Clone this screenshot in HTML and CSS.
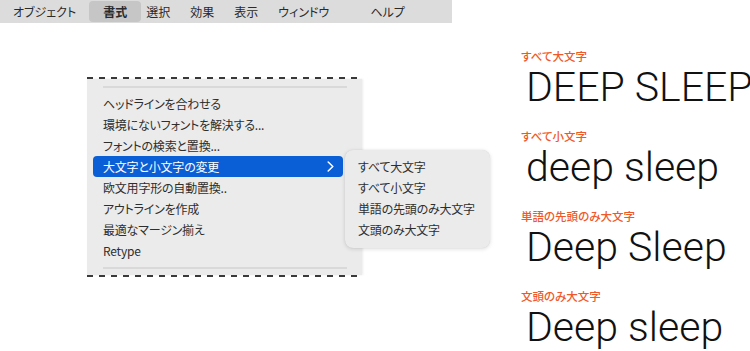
FILE: index.html
```html
<!DOCTYPE html>
<html lang="ja">
<head>
<meta charset="utf-8">
<title>大文字と小文字の変更</title>
<link rel="stylesheet" href="styles.css">
</head>
<body>
<div class="page">
  <div class="left">
    <nav class="menubar">
      <span class="mb-item first">オブジェクト</span>
      <span class="mb-item sel">書式</span>
      <span class="mb-item">選択</span>
      <span class="mb-item">効果</span>
      <span class="mb-item">表示</span>
      <span class="mb-item">ウィンドウ</span>
      <span class="mb-item help">ヘルプ</span>
    </nav>
    <div class="menu">
      <div class="dash"></div>
      <div class="menu-body">
        <div class="sep"></div>
        <ul class="items">
          <li class="item">ヘッドラインを合わせる</li>
          <li class="item">環境にないフォントを解決する...</li>
          <li class="item">フォントの検索と置換...</li>
          <li class="item active">
            <span>大文字と小文字の変更</span>
            <svg class="chev" width="7" height="11" viewBox="0 0 7 11"><path d="M1.2 1 L5.8 5.5 L1.2 10" fill="none" stroke="#fff" stroke-width="1.5" stroke-linecap="round" stroke-linejoin="round"/></svg>
            <ul class="submenu">
              <li class="sub-item">すべて大文字</li>
              <li class="sub-item">すべて小文字</li>
              <li class="sub-item">単語の先頭のみ大文字</li>
              <li class="sub-item">文頭のみ大文字</li>
            </ul>
          </li>
          <li class="item">欧文用字形の自動置換..</li>
          <li class="item">アウトラインを作成</li>
          <li class="item">最適なマージン揃え</li>
          <li class="item">Retype</li>
        </ul>
        <div class="sep bottom"></div>
      </div>
      <div class="dash"></div>
    </div>
  </div>
  <div class="samples">
    <div class="sample">
      <div class="label">すべて大文字</div>
      <div class="text">DEEP SLEEP</div>
    </div>
    <div class="sample">
      <div class="label">すべて小文字</div>
      <div class="text">deep sleep</div>
    </div>
    <div class="sample">
      <div class="label">単語の先頭のみ大文字</div>
      <div class="text">Deep Sleep</div>
    </div>
    <div class="sample">
      <div class="label">文頭のみ大文字</div>
      <div class="text">Deep sleep</div>
    </div>
  </div>
</div>
</body>
</html>
```

FILE: styles.css
```css
* { box-sizing: border-box; }
html, body { margin: 0; padding: 0; background: #fff; }
body {
  width: 750px;
  height: 351px;
  overflow: hidden;
  font-family: "Noto Sans CJK JP", "Noto Sans", sans-serif;
  color: #2e2e2e;
}
ul { list-style: none; margin: 0; padding: 0; }

.page { display: flex; width: 750px; height: 351px; overflow: hidden; }
.left { width: 521px; flex: none; }

/* menu bar */
.menubar {
  width: 452px;
  height: 23px;
  background: #dcdcdc;
  display: flex;
  align-items: center;
  font-size: 12px;
  font-feature-settings: "palt";
  color: #2a2a2a;
}
.mb-item { padding: 0 10px; line-height: 21px; white-space: nowrap; }
.mb-item.first { padding-left: 13px; }
.mb-item.sel {
  background: #c6c6c6;
  border-radius: 4px;
  padding: 0 14px;
  margin: 0 -5px 0 3px;
  font-weight: 700;
}
.mb-item.help { margin-left: 21px; }

/* menu panel */
.menu {
  margin: 54px 0 0 87px;
  width: 275px;
}
.dash {
  height: 2px;
  background: repeating-linear-gradient(90deg, #3a3a3a 0 6px, transparent 6px 12px);
}
.menu-body {
  background: #ebebeb;
  padding: 7px 0 6px;
  font-size: 12px;
  letter-spacing: -0.2px;
  font-feature-settings: "palt";
  box-shadow: 1px 0 2px rgba(0,0,0,0.08);
}
.sep { height: 2px; background: #d9d9d9; margin: 0 15px 0 16px; }
.items { padding: 5px 0 6px; }
.item {
  height: 21px;
  line-height: 21px;
  padding-left: 16px;
  white-space: nowrap;
}
.item.active {
  position: relative;
  background: #0b5fd6;
  color: #fff;
  border-radius: 4px;
  margin: 0 19px 0 6px;
  padding-left: 10px;
  display: flex;
  align-items: center;
  justify-content: space-between;
  padding-right: 9px;
}
.chev { display: block; }

/* submenu */
.submenu {
  position: absolute;
  top: -6px;
  left: 252px;
  width: 145px;
  padding: 6px 0 8px;
  background: #ebebeb;
  border-radius: 8px;
  box-shadow: 0 1px 4px rgba(0,0,0,0.14), 0 0 1px rgba(0,0,0,0.12);
  color: #2e2e2e;
}
.sub-item {
  height: 21px;
  line-height: 21px;
  padding-left: 13px;
  white-space: nowrap;
}

/* samples */
.samples { padding-top: 48px; flex: none; width: 229px; }
.sample { height: 80px; }
.label {
  font-size: 11.5px;
  line-height: 17px;
  color: #f0582a;
  font-weight: 500;
  font-feature-settings: "palt";
}
.text {
  font-family: Roboto, "Liberation Sans", sans-serif;
  font-weight: 300;
  font-size: 41px;
  line-height: 48px;
  color: #111;
  white-space: nowrap;
  padding-left: 5px;
  margin-top: -2px;
}
```
